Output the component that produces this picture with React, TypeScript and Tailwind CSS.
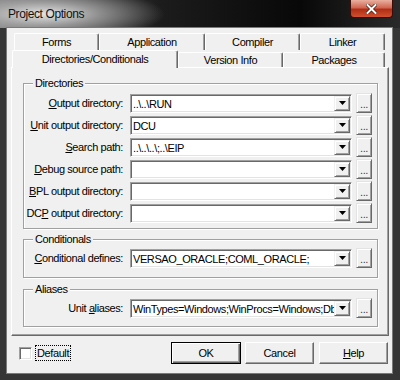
import React from 'react';

interface MnemonicProps {
    pre?: string;
    ch: string;
    post?: string;
}

const Mnemonic: React.FC<MnemonicProps> = ({ pre = '', ch, post = '' }) => (
    <span>
        {pre}
        <span className="underline underline-offset-[1px]">{ch}</span>
        {post}
    </span>
);

const DropArrow: React.FC = () => (
    <svg width="7" height="4" viewBox="0 0 7 4">
        <polygon points="0,0 7,0 3.5,4" fill="#000" />
    </svg>
);

interface ComboProps {
    value: string;
}

const Combo: React.FC<ComboProps> = ({ value }) => (
    <div className="h-[19px] w-[222px] flex bg-white border border-t-[#a0a0a0] border-l-[#a0a0a0] border-r-white border-b-white shadow-[inset_1px_1px_0_#696969,inset_-1px_-1px_0_#e3e3e3]">
        <div className="flex-1 overflow-hidden whitespace-nowrap pl-[2px] pt-[2px] leading-[14px]">{value}</div>
        <div className="mt-[1px] mr-[1px] mb-[1px] w-[16px] flex items-center justify-center bg-[#f0f0f0] border border-t-[#f0f0f0] border-l-[#f0f0f0] border-r-[#696969] border-b-[#696969] shadow-[inset_1px_1px_0_#fff,inset_-1px_-1px_0_#a0a0a0]">
            <DropArrow />
        </div>
    </div>
);

const DotsButton: React.FC = () => (
    <div className="h-[20px] w-[16px] flex items-end justify-center bg-[#f0f0f0] border border-t-[#e3e3e3] border-l-[#e3e3e3] border-r-[#696969] border-b-[#696969] shadow-[inset_1px_1px_0_#fff,inset_-1px_-1px_0_#a0a0a0] text-[#404040] leading-[12px] pb-[2px]">
        ...
    </div>
);

interface FieldRowProps {
    label: React.ReactNode;
    value: string;
}

const FieldRow: React.FC<FieldRowProps> = ({ label, value }) => (
    <div className="flex items-center h-[20px]">
        <div className="w-[98px] text-right whitespace-nowrap">{label}</div>
        <div className="ml-[7px]">
            <Combo value={value} />
        </div>
        <div className="ml-[4px]">
            <DotsButton />
        </div>
    </div>
);

interface GroupProps {
    title: string;
    className?: string;
    children: React.ReactNode;
}

const Group: React.FC<GroupProps> = ({ title, className = '', children }) => (
    <fieldset className={`ml-[11px] w-[355px] border border-[#a0a0a0] shadow-[inset_1px_1px_0_#fff,1px_1px_0_#fff] px-[1px] ${className}`}>
        <legend className="ml-[8px] px-[2px] bg-[#f0f0f0] leading-[13px]">{title}</legend>
        {children}
    </fieldset>
);

const tabBase =
    'flex items-center justify-center bg-[#f0f0f0] border-l border-t border-r border-l-white border-t-white border-r-[#696969] rounded-t-[2px] shadow-[inset_-1px_0_0_#a0a0a0]';

const App: React.FC = () => {
    const dirs = [
        { label: <Mnemonic ch="O" post="utput directory:" />, value: '..\\..\\RUN' },
        { label: <Mnemonic ch="U" post="nit output directory:" />, value: 'DCU' },
        { label: <Mnemonic ch="S" post="earch path:" />, value: '..\\..\\..\\;..\\EIP' },
        { label: <Mnemonic ch="D" post="ebug source path:" />, value: '' },
        { label: <Mnemonic ch="B" post="PL output directory:" />, value: '' },
        { label: <Mnemonic pre="DC" ch="P" post=" output directory:" />, value: '' },
    ];

    return (
        <div className="w-[400px] h-[380px] flex flex-col overflow-hidden bg-[#363636] font-['Liberation_Sans',Arial,sans-serif] text-[11px] tracking-[-0.4px] text-black">
            {/* title bar */}
            <div className="h-[28px] shrink-0 flex bg-[image:radial-gradient(ellipse_120px_26px_at_45px_14px,rgba(235,235,235,0.95),rgba(200,200,200,0.6)_45%,rgba(60,60,60,0)_100%),linear-gradient(to_right,#6a6a6a,#1c1c1c_40%,#080808_75%,#2a2a2a)]">
                <div className="pl-[8px] self-center text-[12px] text-[#111]">Project Options</div>
                <div className="flex-1" />
                <div className="mr-[7px] w-[43px] h-[18px] rounded-b-[4px] border border-t-0 border-[#3a0d08] flex items-center justify-center bg-[image:linear-gradient(to_bottom,#eab0a0,#d06650_45%,#b02e16_55%,#d0502f)]">
                    <svg width="11" height="10" viewBox="0 0 11 10">
                        <path d="M1.5 1 L9.5 9 M9.5 1 L1.5 9" stroke="#4a1208" strokeWidth="3.4" strokeLinecap="square" />
                        <path d="M1.5 1 L9.5 9 M9.5 1 L1.5 9" stroke="#fff" strokeWidth="2" strokeLinecap="square" />
                    </svg>
                </div>
            </div>

            {/* client area */}
            <div className="ml-[7px] mr-[8px] mb-[7px] flex-1 flex flex-col bg-[#f0f0f0] shadow-[0_0_0_1px_#7a7a7a] pt-[5px]">
                {/* tabs back row */}
                <div className="ml-[7px] flex h-[17px]">
                    <div className={`${tabBase} w-[85px]`}>Forms</div>
                    <div className={`${tabBase} w-[106px]`}>Application</div>
                    <div className={`${tabBase} w-[95px]`}>Compiler</div>
                    <div className={`${tabBase} w-[85px]`}>Linker</div>
                </div>
                {/* tabs front row */}
                <div className="ml-[5px] flex h-[18px] items-end relative z-10 -mb-px">
                    <div className={`${tabBase} w-[166px] h-[18px] pb-px`}>Directories/Conditionals</div>
                    <div className={`${tabBase} w-[105px] h-[15px] mb-px`}>Version Info</div>
                    <div className={`${tabBase} w-[102px] h-[15px] mb-px`}>Packages</div>
                </div>

                {/* tab page */}
                <div className="ml-[4px] w-[378px] h-[269px] shrink-0 border border-t-white border-l-white border-r-[#696969] border-b-[#696969] shadow-[inset_-1px_-1px_0_#a0a0a0] pt-[9px]">
                    <Group title="Directories" className="pt-[3px] pb-[5px]">
                        <div className="flex flex-col gap-[2px]">
                            {dirs.map((d, i) => (
                                <FieldRow key={i} label={d.label} value={d.value} />
                            ))}
                        </div>
                    </Group>
                    <Group title="Conditionals" className="mt-[4px] pt-[2px] pb-[9px]">
                        <FieldRow label={<Mnemonic ch="C" post="onditional defines:" />} value="VERSAO_ORACLE;COML_ORACLE;" />
                    </Group>
                    <Group title="Aliases" className="mt-[5px] pt-[2px] pb-[8px]">
                        <FieldRow
                            label={<Mnemonic pre="Unit " ch="a" post="liases:" />}
                            value="WinTypes=Windows;WinProcs=Windows;DbiTypes=BDE;DbiProcs=BDE;DbiErrs=BDE"
                        />
                    </Group>
                </div>

                {/* bottom bar */}
                <div className="flex items-center mt-[6px] h-[22px]">
                    <div className="ml-[12px] w-[13px] h-[13px] bg-white border border-t-[#a0a0a0] border-l-[#a0a0a0] border-r-white border-b-white shadow-[inset_1px_1px_0_#696969,inset_-1px_-1px_0_#e3e3e3]" />
                    <div className="ml-[3px] px-[1px] border border-dotted border-black leading-[14px]">Default</div>
                    <div className="flex-1" />
                    <button className="w-[70px] h-[22px] bg-[#f0f0f0] border border-black shadow-[inset_1px_1px_0_#fff,inset_-1px_-1px_0_#696969,inset_-2px_-2px_0_#a0a0a0]">
                        OK
                    </button>
                    <button className="ml-[4px] w-[69px] h-[22px] bg-[#f0f0f0] border border-t-white border-l-white border-r-[#696969] border-b-[#696969] shadow-[inset_-1px_-1px_0_#a0a0a0]">
                        Cancel
                    </button>
                    <button className="ml-[5px] mr-[4px] w-[69px] h-[22px] bg-[#f0f0f0] border border-t-white border-l-white border-r-[#696969] border-b-[#696969] shadow-[inset_-1px_-1px_0_#a0a0a0]">
                        <Mnemonic ch="H" post="elp" />
                    </button>
                </div>
            </div>
        </div>
    );
};

export default App;
